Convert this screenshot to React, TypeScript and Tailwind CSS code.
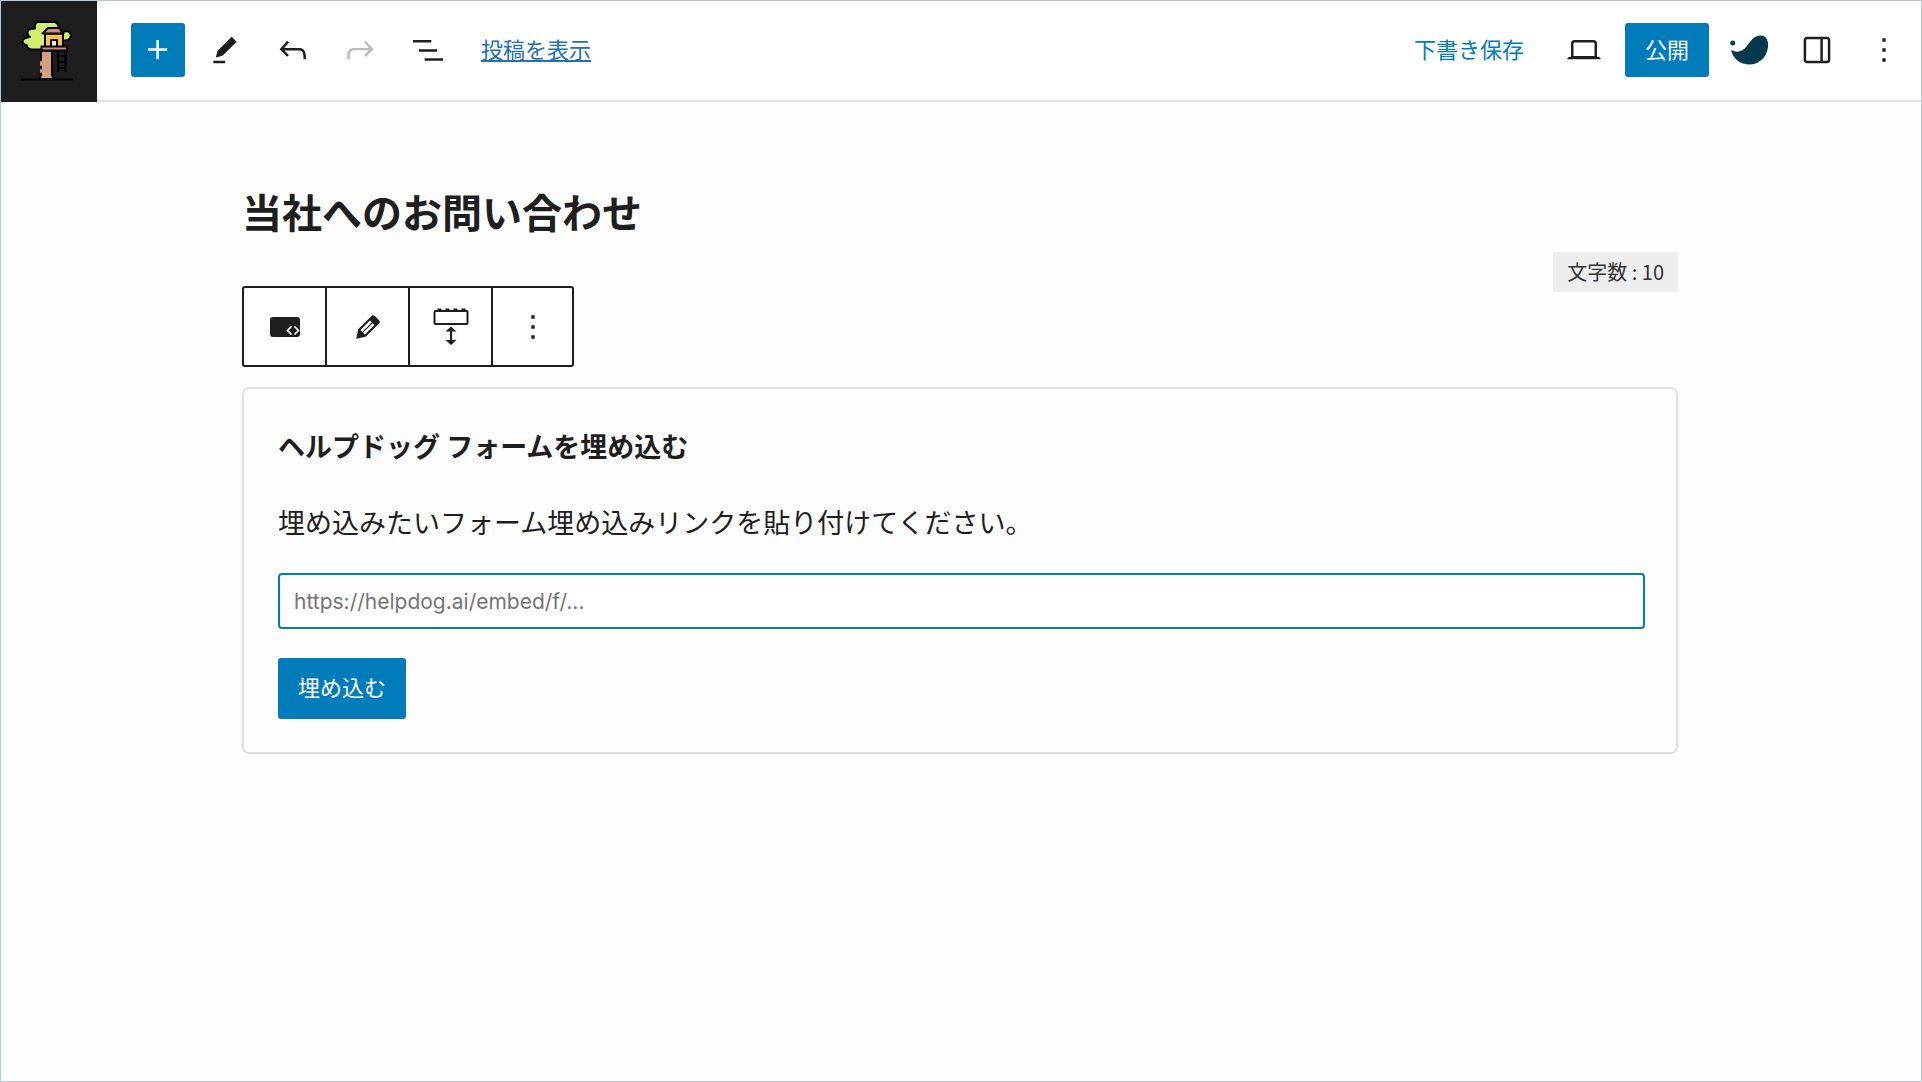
import type { ReactNode } from 'react';

type IconProps = { d: string; className?: string };

function Icon({ d, className = 'size-10' }: IconProps) {
  return (
    <svg viewBox="0 0 24 24" className={className} fill="currentColor" aria-hidden="true">
      <path d={d} />
    </svg>
  );
}

const paths = {
  plus: 'M11 12.5V17.5H12.5V12.5H17.5V11H12.5V6H11V11H6V12.5H11Z',
  edit: 'm19 7-3-3-8.5 8.5-1 4 4-1L19 7Zm-7 11.5H5V20h7v-1.5Z',
  undo: 'M18.3 11.7c-.6-.6-1.4-.9-2.3-.9H6.7l2.9-3.3-1.1-1-4.5 5L8.5 16l1-1-2.7-2.7H16c.5 0 .9.2 1.3.5 1 1 1 3.4 1 4.5v.3h1.5v-.2c0-1.5 0-4.3-1.5-5.7z',
  redo: 'M15.6 6.5l-1.1 1 2.9 3.3H8c-.9 0-1.7.3-2.3.9-1.4 1.5-1.4 4.2-1.4 5.6v.2h1.5v-.3c0-1.1 0-3.5 1-4.5.3-.3.7-.5 1.3-.5h9.2L14.5 15l1.1 1.1 4.6-4.6-4.6-5z',
  list: 'M3 6h11v1.5H3V6Zm3.5 5.5h11V13h-11v-1.5ZM21 17H10v1.5h11V17Z',
  laptop:
    'M20.5 16h-.7V8c0-1.1-.9-2-2-2H6.2c-1.1 0-2 .9-2 2v8h-.7c-.8 0-1.5.7-1.5 1.5h20c0-.8-.7-1.5-1.5-1.5zM5.7 8c0-.3.2-.5.5-.5h11.6c.3 0 .5.2.5.5v7.6H5.7V8z',
  sidebar:
    'M18 4H6c-1.1 0-2 .9-2 2v12c0 1.1.9 2 2 2h12c1.1 0 2-.9 2-2V6c0-1.1-.9-2-2-2zm-4 14.5H6c-.3 0-.5-.2-.5-.5V6c0-.3.2-.5.5-.5h8v13zm4.5-.5c0 .3-.2.5-.5.5h-2.5v-13H18c.3 0 .5.2.5.5v12z',
  more: 'M13 19h-2v-2h2v2zm0-6h-2v-2h2v2zm0-6h-2V5h2v2z',
};

function TreehouseLogo() {
  return (
    <svg viewBox="0 0 54 62" className="h-[62px] w-[54px]" aria-hidden="true">
      <g stroke="#000" strokeWidth="2" strokeLinejoin="round" strokeLinecap="round">
        <path
          d="M18 1H35Q38 2 39 7L38 28.500H12Q7 28 7 24.500Q2.500 23 2.500 20Q3 17 10 16Q7 14 7.500 11Q8 7.500 15 7.500Q14 2 18 1Z"
          fill="#d3ee71"
        />
        <path d="M43 11Q50 8.500 51 14.500Q50.500 20 43 19.500Z" fill="#d3ee71" />
        <path d="M21 30H32V54L34 58H19L21 54Z" fill="#d59f83" />
        <path d="M25 12.500H43V26H25Z" fill="#ffc14f" />
        <path d="M28 7H39L43.500 12.500H22.500Z" fill="#cd9179" />
        <path d="M31 19H37V26H31Z" fill="#fff0d0" />
        <path d="M21.500 25.500H47V29.500H21.500Z" fill="#cd9179" />
        <path d="M38 31V50M45.500 31V50M38 35H45.500M38 41H45.500M38 47H45.500" fill="none" />
        <path d="M1.500 58.500H52" fill="none" />
        <path d="M21 41V44M21 49V51" fill="none" stroke="#d59f83" />
      </g>
    </svg>
  );
}

function WhaleIcon() {
  return (
    <svg viewBox="0 0 40 32" className="h-8 w-10" fill="#04384d" aria-hidden="true">
      <circle cx="3.700" cy="9" r="2.500" />
      <path d="M2 16C8 19 13 18 17.500 12.500C22 6.500 25 1.500 31.500 1.500C37 1.500 39.500 6 39 13C38 23 30 30.500 20.500 30.500C11 30.500 4 24.500 2 16Z" />
    </svg>
  );
}

function EmbedIcon() {
  return (
    <svg viewBox="0 0 32 22" className="h-[22px] w-8" aria-hidden="true">
      <rect x="1" y="1" width="30" height="20" rx="3" fill="#1e1e1e" />
      <path d="M22.500 10.500 18.500 14.500l4 4M25.500 10.500l4 4-4 4" fill="none" stroke="#fff" strokeWidth="1.700" />
    </svg>
  );
}

function PencilIcon() {
  return (
    <svg viewBox="0 0 20 20" className="size-[34px]" fill="currentColor" aria-hidden="true">
      <path d="m13.890 3.390 2.710 2.720c.46.46.42 1.240.03 1.640l-8.010 8.020-5.560 1.160 1.160-5.580s7.600-7.630 7.990-8.030c.39-.39 1.220-.39 1.680.07zm-2.730 2.790-5.590 5.610 1.110 1.110 5.540-5.650zm-2.970 8.230 5.580-5.600-1.070-1.080-5.590 5.600z" />
    </svg>
  );
}

function BlockHeightIcon() {
  return (
    <svg viewBox="0 0 36 38" className="h-[38px] w-9" aria-hidden="true">
      <rect x="1.500" y="3" width="33" height="13" rx="1" fill="none" stroke="#1e1e1e" strokeWidth="2" />
      <path d="M4.500 .5h4v3h-4zM12.500 .5h4v3h-4zM20.500 .5h4v3h-4zM28.500 .5h4v3h-4z" fill="#1e1e1e" />
      <path d="M18 22V33" stroke="#1e1e1e" strokeWidth="2" />
      <path d="M18 18.500 23.500 23.500H12.500ZM18 37 23.500 32H12.500Z" fill="#1e1e1e" />
    </svg>
  );
}

type ButtonProps = { label: string; children: ReactNode; disabled?: boolean };

function IconButton({ label, children, disabled }: ButtonProps) {
  return (
    <button
      type="button"
      aria-label={label}
      disabled={disabled}
      className="flex size-[54px] items-center justify-center text-[#1e1e1e] disabled:text-[#bbb]"
    >
      {children}
    </button>
  );
}

function ToolbarButton({ label, children }: ButtonProps) {
  return (
    <button
      type="button"
      aria-label={label}
      className="flex h-[77px] w-[83px] items-center justify-center border-l-2 border-[#1e1e1e] first:w-[81px] first:border-l-0 last:w-[81px]"
    >
      {children}
    </button>
  );
}

function Header() {
  return (
    <header className="flex items-stretch border-b-2 border-[#e2e2e2] bg-white">
      <a
        href="#home"
        aria-label="ホーム"
        className="-mb-0.5 flex h-[101px] w-24 items-center justify-center bg-[#1e1e1e] pr-1"
      >
        <TreehouseLogo />
      </a>
      <div className="flex flex-1 items-center justify-between pr-2.5 pb-0.5 pl-[34px]">
        <div className="flex items-center gap-[14px]">
          <div className="flex gap-[13px]">
            <button
              type="button"
              aria-label="ブロックを追加"
              className="flex size-[54px] items-center justify-center rounded-[3px] bg-[#007cba] text-white"
            >
              <Icon d={paths.plus} />
            </button>
            <IconButton label="編集">
              <Icon d={paths.edit} />
            </IconButton>
          </div>
          <div className="flex gap-[13px]">
            <IconButton label="元に戻す">
              <Icon d={paths.undo} />
            </IconButton>
            <IconButton label="やり直す" disabled>
              <Icon d={paths.redo} />
            </IconButton>
          </div>
          <IconButton label="リスト表示">
            <Icon d={paths.list} />
          </IconButton>
          <a
            href="#post"
            className="ml-3 pb-1 text-[22px] leading-8 text-[#2271b1] underline underline-offset-2"
          >
            投稿を表示
          </a>
        </div>
        <div className="flex items-center gap-[14px]">
          <div className="flex gap-[13px]">
            <button type="button" className="h-[54px] px-5 pb-0.5 text-[22px] text-[#007cba]">
              下書き保存
            </button>
            <IconButton label="プレビュー">
              <Icon d={paths.laptop} />
            </IconButton>
          </div>
          <div className="flex gap-[13px]">
            <button
              type="button"
              className="h-[54px] rounded-[3px] bg-[#007cba] px-5 pb-0.5 text-[22px] text-white"
            >
              公開
            </button>
            <IconButton label="拡張機能">
              <WhaleIcon />
            </IconButton>
          </div>
          <div className="flex gap-[13px]">
            <IconButton label="設定">
              <Icon d={paths.sidebar} />
            </IconButton>
            <IconButton label="オプション">
              <Icon d={paths.more} />
            </IconButton>
          </div>
        </div>
      </div>
    </header>
  );
}

export default function App() {
  return (
    <div
      lang="ja"
      className="min-h-screen border border-[#b8c6da] bg-[#fdfdfd] font-['Noto_Sans_CJK_JP',sans-serif] text-[#1e1e1e]"
    >
      <Header />
      <main className="pt-[79px] pr-[243px] pl-[241px]">
        <h1 className="text-[40px] leading-[60px] font-bold">当社へのお問い合わせ</h1>
        <div className="mt-[11px] flex items-start justify-between">
          <div
            role="toolbar"
            aria-label="ブロックツール"
            className="mt-[34px] flex rounded-[3px] border-2 border-[#1e1e1e] bg-white"
          >
            <ToolbarButton label="埋め込みブロック">
              <EmbedIcon />
            </ToolbarButton>
            <ToolbarButton label="編集">
              <PencilIcon />
            </ToolbarButton>
            <ToolbarButton label="高さ">
              <BlockHeightIcon />
            </ToolbarButton>
            <ToolbarButton label="オプション">
              <Icon d={paths.more} />
            </ToolbarButton>
          </div>
          <p className="bg-[#eee] px-[14px] text-xl leading-10 text-[#333]">文字数 : 10</p>
        </div>
        <form
          className="mt-5 rounded-[7px] border-2 border-[#e0e0e0] pt-[37px] pr-[31px] pb-[33px] pl-[34px]"
          onSubmit={(e) => e.preventDefault()}
        >
          <h2 className="text-[27px] leading-10 font-bold">ヘルプドッグ フォームを埋め込む</h2>
          <label htmlFor="embed-url" className="mt-9 block text-[27px] leading-10">
            埋め込みたいフォーム埋め込みリンクを貼り付けてください。
          </label>
          <input
            id="embed-url"
            type="url"
            placeholder="https://helpdog.ai/embed/f/..."
            className="mt-[31px] block h-14 w-full rounded-[4px] border-2 border-[#007cba] bg-white px-[14px] font-['Inter',sans-serif] text-[21px] outline-none placeholder:text-[#757575]"
          />
          <button
            type="submit"
            className="mt-[29px] block h-[61px] rounded-[3px] bg-[#007cba] px-5 pb-1 text-[22px] text-white"
          >
            埋め込む
          </button>
        </form>
      </main>
    </div>
  );
}
